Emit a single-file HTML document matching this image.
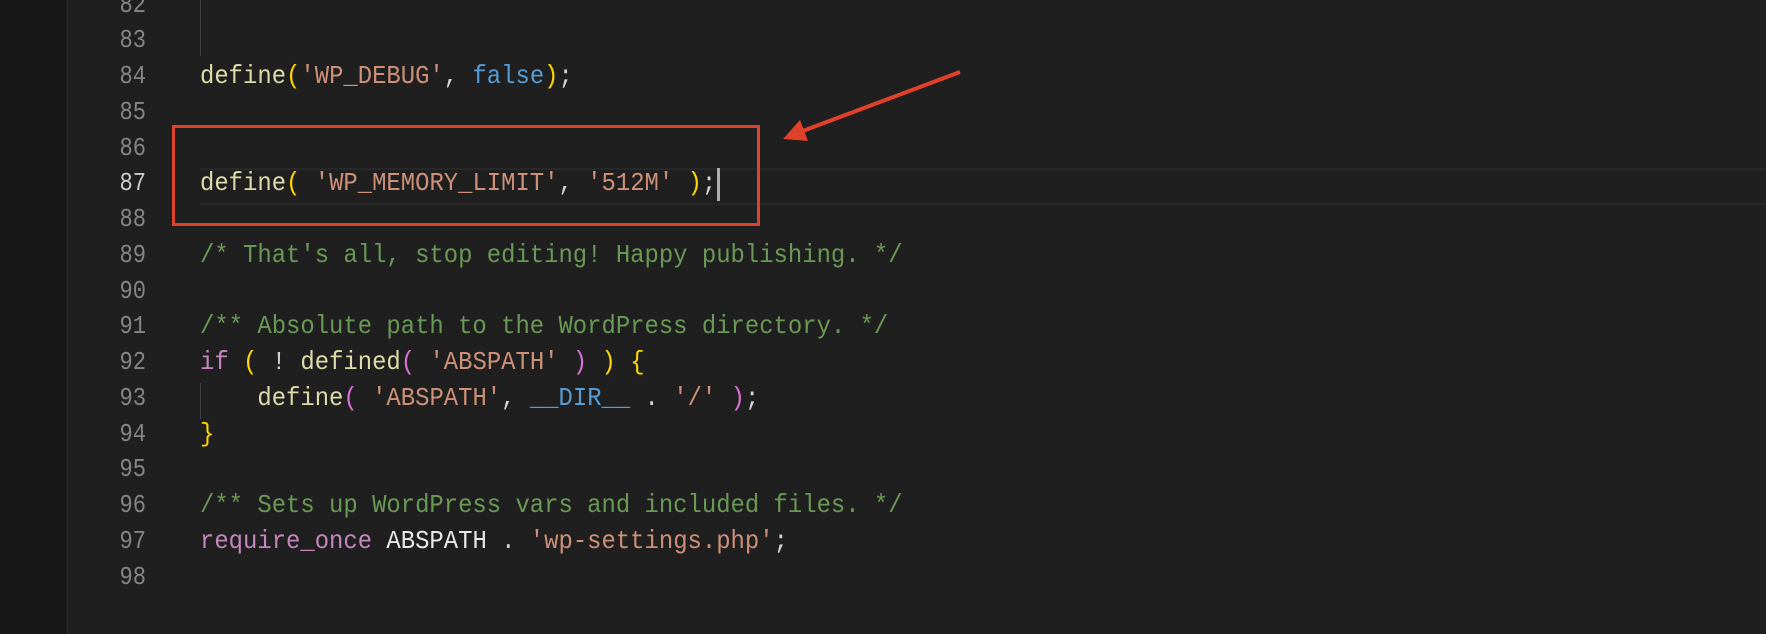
<!DOCTYPE html>
<html><head><style>
html,body{margin:0;padding:0;width:1766px;height:634px;overflow:hidden;background:#1f1f1f;}
.gut{position:absolute;left:0;top:0;width:67px;height:634px;background:#181818;border-right:1px solid #2a2a2a;}
.ln{position:absolute;left:67px;width:79px;text-align:right;color:#858585;font:26px "Liberation Mono",monospace;height:36px;line-height:36px;transform:scaleX(0.85);transform-origin:right;}
.code{position:absolute;left:200px;font:26px "Liberation Mono",monospace;height:36px;line-height:36px;white-space:pre;color:#d4d4d4;transform:scaleX(0.919);transform-origin:left;}
.f{color:#dcdcaa}.y{color:#ffd700}.s{color:#ce9178}.b{color:#569cd6}.c{color:#6a9955}.k{color:#c586c0}.p{color:#da70d6}
.hl{position:absolute;left:200px;right:0;top:168px;height:33px;border-top:2px solid #282828;border-bottom:2px solid #282828;}
.guide{position:absolute;left:200px;width:1px;background:#404040;}
</style></head><body>
<div class="gut"></div>
<div class="hl"></div>
<div class="guide" style="top:0;height:56px"></div>
<div class="guide" style="top:383px;height:36px"></div>
<div class="ln" style="top:-13px">82</div>
<div class="ln" style="top:22px">83</div>
<div class="ln" style="top:58px">84</div>
<div class="ln" style="top:94px">85</div>
<div class="ln" style="top:130px">86</div>
<div class="ln" style="top:165px;color:#ccc">87</div>
<div class="ln" style="top:201px">88</div>
<div class="ln" style="top:237px">89</div>
<div class="ln" style="top:273px">90</div>
<div class="ln" style="top:308px">91</div>
<div class="ln" style="top:344px">92</div>
<div class="ln" style="top:380px">93</div>
<div class="ln" style="top:416px">94</div>
<div class="ln" style="top:451px">95</div>
<div class="ln" style="top:487px">96</div>
<div class="ln" style="top:523px">97</div>
<div class="ln" style="top:559px">98</div>

<div class="code" style="top:58px"><span class="f">define</span><span class="y">(</span><span class="s">'WP_DEBUG'</span>, <span class="b">false</span><span class="y">)</span>;</div>
<div class="code" style="top:165px"><span class="f">define</span><span class="y">(</span> <span class="s">'WP_MEMORY_LIMIT'</span>, <span class="s">'512M'</span> <span class="y">)</span>;</div>
<div style="position:absolute;left:717px;top:168px;width:3px;height:33px;background:#aeafad"></div>
<div class="code" style="top:237px"><span class="c">/* That's all, stop editing! Happy publishing. */</span></div>
<div class="code" style="top:308px"><span class="c">/** Absolute path to the WordPress directory. */</span></div>
<div class="code" style="top:344px"><span class="k">if</span> <span class="y">(</span> ! <span class="f">defined</span><span class="p">(</span> <span class="s">'ABSPATH'</span> <span class="p">)</span> <span class="y">)</span> <span class="y">{</span></div>
<div class="code" style="top:380px">    <span class="f">define</span><span class="p">(</span> <span class="s">'ABSPATH'</span>, <span class="b">__DIR__</span> . <span class="s">'/'</span> <span class="p">)</span>;</div>
<div class="code" style="top:416px"><span class="y">}</span></div>
<div class="code" style="top:487px"><span class="c">/** Sets up WordPress vars and included files. */</span></div>
<div class="code" style="top:523px"><span class="k">require_once</span> <span style="color:#e8e8e8">ABSPATH</span> . <span class="s">'wp-settings.php'</span>;</div>

<div style="position:absolute;left:172px;top:125px;width:582px;height:95px;border:3.5px solid #e0412b"></div>
<svg style="position:absolute;left:0;top:0" width="1766" height="634">
<line x1="960" y1="72" x2="800" y2="132" stroke="#e0412b" stroke-width="4"/>
<polygon points="783,139 800,120 808,141" fill="#e0412b"/>
</svg>
</body></html>
